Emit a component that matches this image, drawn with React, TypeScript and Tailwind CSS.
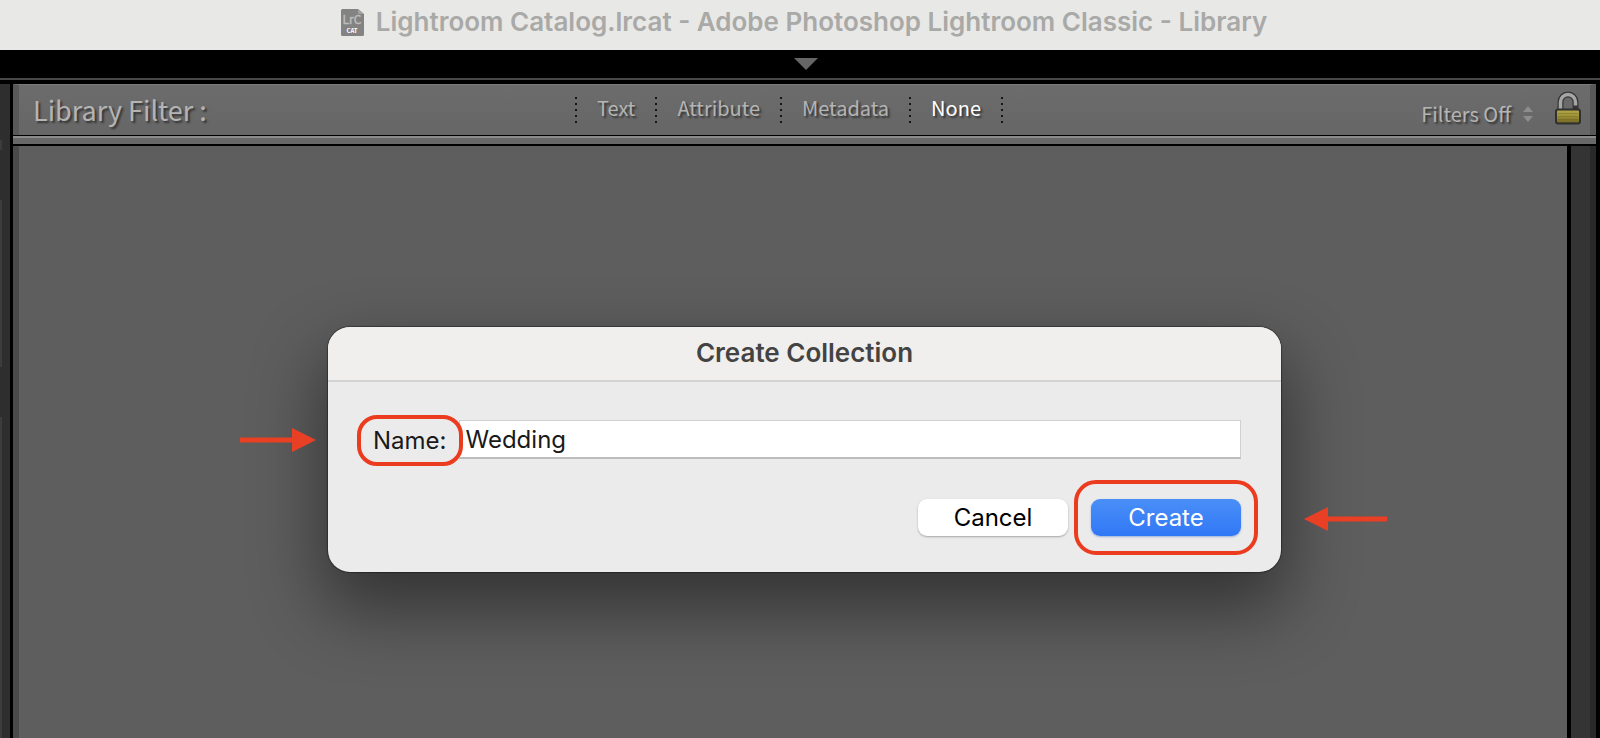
import React from 'react';

interface FilterTab {
  label: string;
  active?: boolean;
}

const filterTabs: FilterTab[] = [
  { label: 'Text' },
  { label: 'Attribute' },
  { label: 'Metadata' },
  { label: 'None', active: true },
];

const CatalogIcon = () => (
  <svg width="23" height="27" viewBox="0 0 23 27" aria-hidden="true">
    <path d="M1.5 0H17l6 5v20.500a1.500 1.500 0 0 1-1.500 1.500h-20A1.500 1.500 0 0 1 0 25.500v-24A1.500 1.500 0 0 1 1.500 0z" fill="#838383" />
    <path d="M17 0l6 5h-4.500A1.500 1.500 0 0 1 17 3.500z" fill="#a3a3a3" />
    <text x="11" y="15" textAnchor="middle" fontSize="12" fill="#bcbcbc" stroke="#bcbcbc" strokeWidth="0.400" fontFamily="'Noto Sans CJK SC', sans-serif">LrC</text>
    <text x="11" y="24" textAnchor="middle" fontSize="6" fontWeight="700" fill="#ffffff" fontFamily="'Noto Sans CJK SC', sans-serif">CAT</text>
  </svg>
);

const LockIcon = () => (
  <svg width="26" height="34" viewBox="0 0 26 34" aria-hidden="true">
    <defs>
      <linearGradient id="brass" x1="0" y1="0" x2="0" y2="1">
        <stop offset="0" stopColor="#b5a848" />
        <stop offset="0.500" stopColor="#9c8f35" />
        <stop offset="1" stopColor="#6d6420" />
      </linearGradient>
    </defs>
    <path d="M5.500 20v-9a7.500 7.500 0 0 1 15 0v4.500l-2-1" fill="none" stroke="#353535" strokeWidth="6" />
    <path d="M5.500 19v-8a7.500 7.500 0 0 1 15 0v3.500" fill="none" stroke="#a6a6a6" strokeWidth="3.500" />
    <rect x="1" y="18.500" width="24" height="14" rx="2" fill="url(#brass)" stroke="#303030" strokeWidth="2" />
    <path d="M3 22.500h20M3 25.500h20M3 28.500h20" stroke="#5f571d" strokeOpacity="0.300" />
  </svg>
);

const ArrowRight = () => (
  <svg width="76" height="24" viewBox="0 0 76 24" className="absolute top-[101px] -left-[88px]" aria-hidden="true">
    <path d="M0 9.500h52V0l24 12-24 12v-9.500H0z" fill="#e93f24" />
  </svg>
);

const ArrowLeft = () => (
  <svg width="83" height="24" viewBox="0 0 83 24" className="absolute top-[180px] -right-[106px]" aria-hidden="true">
    <path d="M83 9.500H24V0L0 12l24 12v-9.500h59z" fill="#e93f24" />
  </svg>
);

const Divider = () => (
  <span className="h-[26px] w-[2px] bg-[repeating-linear-gradient(to_bottom,#161616_0px,#161616_2px,transparent_2px,transparent_6px)]" />
);

const TitleBar = () => (
  <header className="flex h-[50px] items-center justify-center gap-3 bg-[#e8e8e6] pb-[6px] pl-2">
    <CatalogIcon />
    <h1 className="font-[Inter,sans-serif] text-[26px] leading-8 font-semibold text-[#a9a9a7]">
      Lightroom Catalog.lrcat - Adobe Photoshop Lightroom Classic - Library
    </h1>
  </header>
);

const FilterBar = () => (
  <div className="flex h-[51px] items-center border-x-[6px] border-t border-x-[#585858] border-t-[#7a7a7a] bg-linear-to-b from-[#6c6c6c] to-[#666666] text-[#b4b4b4]">
    <div className="flex-1 pl-[14px] text-[27px] leading-8 [text-shadow:2px_2px_2px_rgba(0,0,0,0.5)]">Library Filter :</div>
    <nav className="mr-9 flex items-center">
      <Divider />
      {filterTabs.map((tab) => (
        <React.Fragment key={tab.label}>
          <button
            type="button"
            className={
              tab.active
                ? 'px-5 pb-1 text-xl leading-6 text-white [text-shadow:2px_2px_2px_rgba(0,0,0,0.5)]'
                : 'px-5 pb-1 text-xl leading-6 [text-shadow:2px_2px_2px_rgba(0,0,0,0.5)]'
            }
          >
            {tab.label}
          </button>
          <Divider />
        </React.Fragment>
      ))}
    </nav>
    <div className="flex flex-1 items-center justify-end pr-[9px]">
      <button type="button" className="flex items-center gap-3 pt-2 text-xl leading-8 [text-shadow:2px_2px_2px_rgba(0,0,0,0.5)]">
        Filters Off
        <svg width="10" height="16" viewBox="0 0 10 16" aria-hidden="true">
          <path d="M0 6l5-6 5 6zM0 10l5 6 5-6z" fill="#8d8d8d" />
        </svg>
      </button>
      <button type="button" aria-label="Lock filters" className="ml-[22px] pb-1">
        <LockIcon />
      </button>
    </div>
  </div>
);

const CreateCollectionDialog = () => (
  <form
    role="dialog"
    aria-labelledby="dialog-title"
    onSubmit={(e) => e.preventDefault()}
    className="relative h-fit w-full max-w-[953px] rounded-[22px] bg-[#ebebeb] font-[Inter,sans-serif] text-2xl text-[#1a1a1a] shadow-[0_0_1px_1px_rgba(0,0,0,0.35),0_32px_70px_6px_rgba(0,0,0,0.45)]"
  >
    <h2 id="dialog-title" className="rounded-t-[22px] border-b-2 border-[#d4d4d4] bg-[#f0efed] pt-[9px] pb-[10px] text-center text-[26px] leading-[34px] font-semibold text-[#434343]">
      Create Collection
    </h2>
    <div className="flex items-start px-10 pt-[33px]">
      <label htmlFor="name" className="relative z-10 -ml-[11px] rounded-[20px] border-4 border-[#ec3c20] px-3 leading-[43px]">
        Name:
      </label>
      <input
        id="name"
        type="text"
        defaultValue="Wedding"
        className="mt-[5px] -ml-1 h-[39px] min-w-0 flex-1 border border-b-2 border-[#d0d0d0] border-b-[#bdbdbd] bg-white px-[6px] outline-none"
      />
    </div>
    <div className="flex items-center justify-end pt-[14px] pr-[23px] pb-[17px]">
      <button type="button" className="h-[37px] w-[150px] rounded-[9px] bg-white text-black shadow-[0_1px_2px_rgba(0,0,0,0.3)]">
        Cancel
      </button>
      <div className="ml-[6px] rounded-[22px] border-4 border-[#ec3c20] px-[13px] py-[15px]">
        <button type="submit" className="block h-[37px] w-[150px] rounded-[9px] bg-linear-to-b from-[#4a8ff7] to-[#3077f6] text-white shadow-[0_1px_2px_rgba(40,90,200,0.4)]">
          Create
        </button>
      </div>
    </div>
    <ArrowRight />
    <ArrowLeft />
  </form>
);

export default function App() {
  return (
    <div className="flex min-h-screen flex-col bg-black font-['Noto_Sans_CJK_SC',sans-serif]">
      <TitleBar />
      <div className="flex h-7 items-center justify-center pl-[11px]">
        <svg width="24" height="12" viewBox="0 0 24 12" aria-hidden="true">
          <path d="M0 0h24L12 12z" fill="#666666" />
        </svg>
      </div>
      <div className="mb-[4px] h-[2px] bg-[#474747]" />
      <div className="flex flex-1">
        <aside className="mr-[3px] w-[10px] bg-[#2e2e2e]">
          <div className="mt-[56px] h-[10px] w-[2px] bg-[#3c3c3c]" />
          <div className="mt-[50px] h-[167px] w-[2px] bg-[#3c3c3c]" />
          <div className="mt-[50px] h-[321px] w-[2px] bg-[#3c3c3c]" />
        </aside>
        <main className="relative mr-1 flex flex-1 flex-col">
          <FilterBar />
          <div className="mt-px mb-[2px] h-2 border-t-2 border-[#8a8a8a] bg-[#686868]" />
          <div className="flex flex-1">
            <div className="flex-1 border-l-[6px] border-[#4a4a4a] bg-[#5e5e5e]" />
            <div className="ml-1 w-[25px] border-r-[6px] border-[#292929] bg-[#343434]" />
          </div>
          <div className="absolute inset-0 flex justify-center overflow-hidden pt-[243px]">
            <CreateCollectionDialog />
          </div>
        </main>
      </div>
    </div>
  );
}
